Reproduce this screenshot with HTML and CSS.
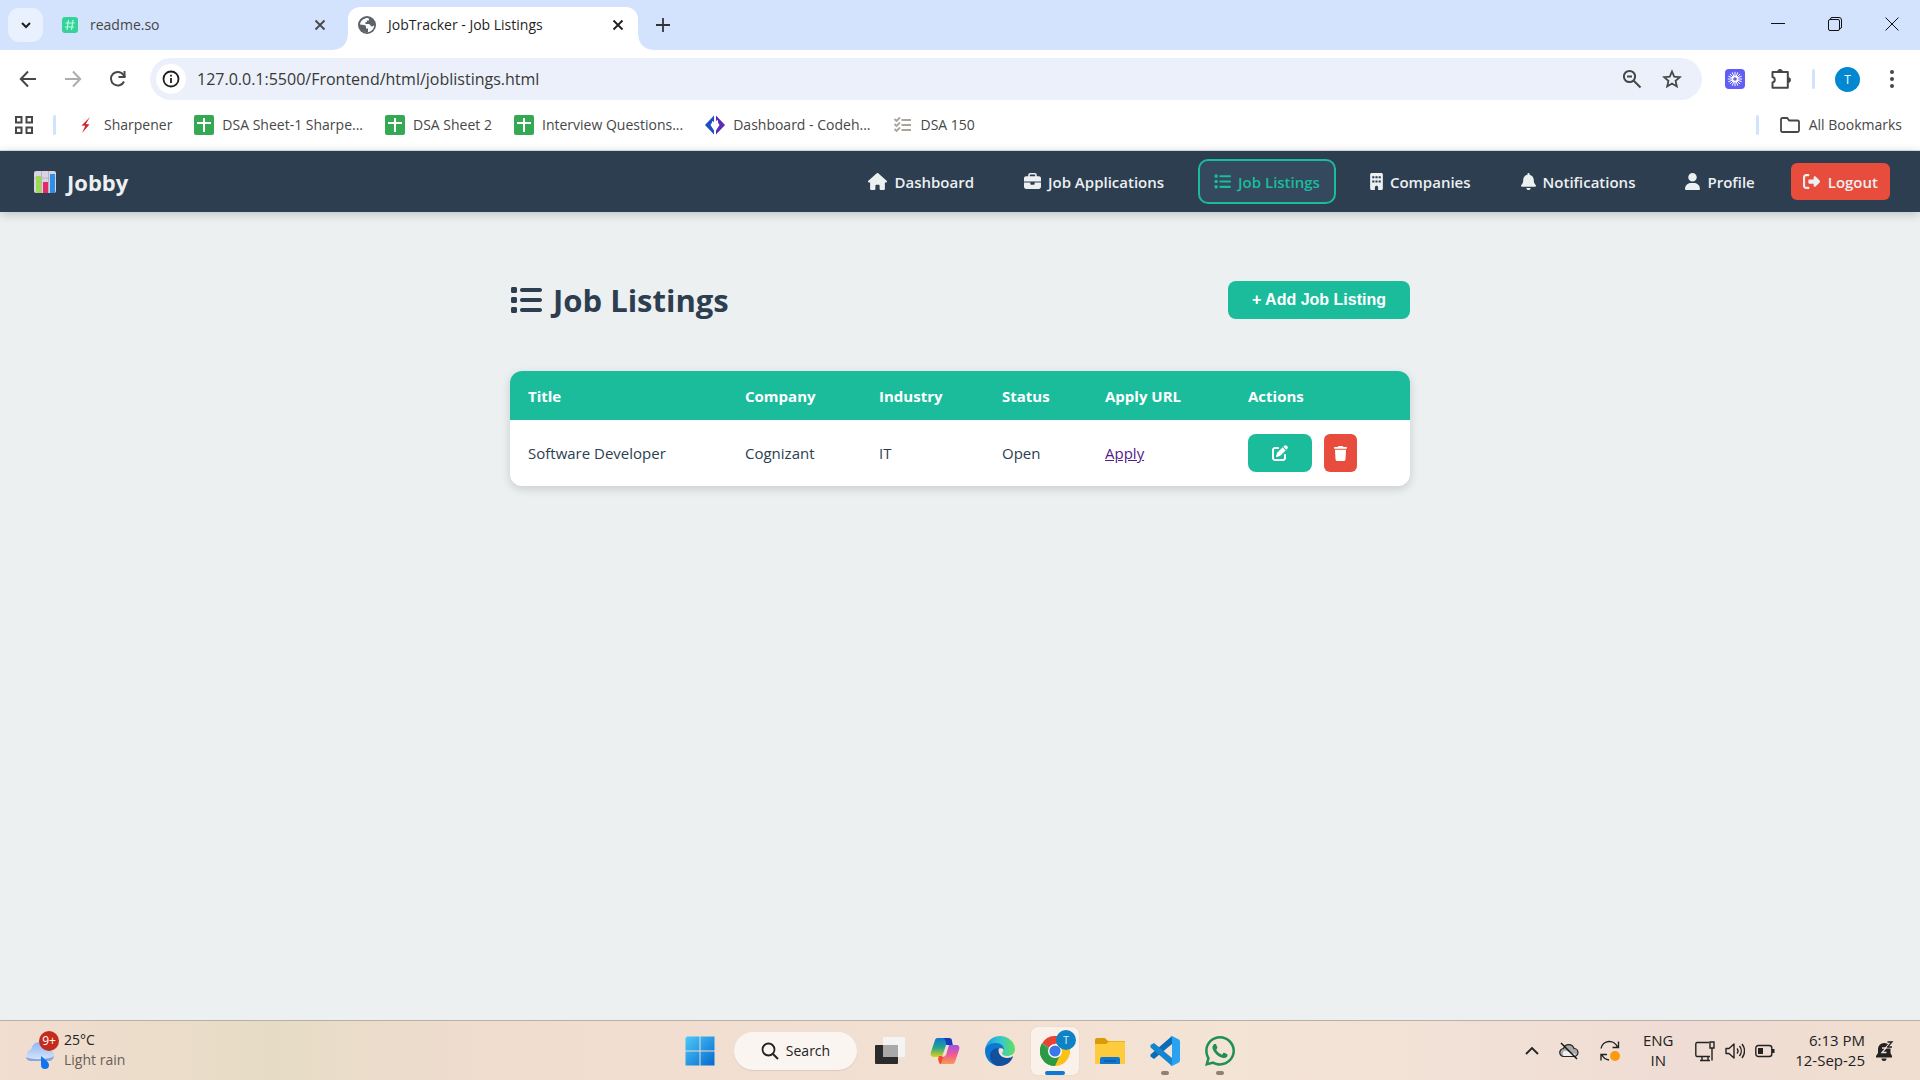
FILE: index.html
```
<!DOCTYPE html>
<html lang="en">
<head>
<meta charset="utf-8">
<meta name="viewport" content="width=device-width, initial-scale=1">
<title>JobTracker - Job Listings</title>
<link rel="stylesheet" href="styles.css">
</head>
<body>
<svg class="sprite" aria-hidden="true">
  <symbol id="list" viewBox="0 0 512 512"><path d="M40 48C26.700 48 16 58.700 16 72v48c0 13.300 10.700 24 24 24h48c13.300 0 24-10.700 24-24V72c0-13.300-10.700-24-24-24H40zM192 64c-17.700 0-32 14.300-32 32s14.300 32 32 32h288c17.700 0 32-14.300 32-32s-14.300-32-32-32H192zm0 160c-17.700 0-32 14.300-32 32s14.300 32 32 32h288c17.700 0 32-14.300 32-32s-14.300-32-32-32H192zm0 160c-17.700 0-32 14.300-32 32s14.300 32 32 32h288c17.700 0 32-14.300 32-32s-14.300-32-32-32H192zM16 232v48c0 13.300 10.700 24 24 24h48c13.300 0 24-10.700 24-24v-48c0-13.300-10.700-24-24-24H40c-13.300 0-24 10.700-24 24zM40 368c-13.300 0-24 10.700-24 24v48c0 13.300 10.700 24 24 24h48c13.300 0 24-10.700 24-24v-48c0-13.300-10.700-24-24-24H40z"/></symbol>
  <symbol id="sheet" viewBox="0 0 20 20"><rect width="20" height="20" rx="2" fill="#34a853"/><path d="M9 3h2v4h6v2h-6v8H9V9H3V7h6z" fill="#fff"/></symbol>
  <symbol id="cross" viewBox="0 0 12 12"><path d="M1.500 1.500l9 9M10.500 1.500l-9 9" fill="none" stroke="currentColor" stroke-width="1.800"/></symbol>
</svg>

<div class="tabstrip">
  <button class="tab-search" aria-label="Search tabs"><svg width="12" height="12" viewBox="0 0 12 12"><path d="M2 4l4 4 4-4" fill="none" stroke="#1f1f1f" stroke-width="2"/></svg></button>
  <div class="tab">
    <svg width="16" height="16" viewBox="0 0 16 16"><rect width="16" height="16" rx="3" fill="#36d399"/><path d="M6.500 3L5 13M11 3L9.500 13M3.500 6h9M3 10h9" stroke="#b8ffe4" stroke-width="1.200"/></svg>
    <span class="tab-title">readme.so</span>
    <button class="tab-close" aria-label="Close tab"><svg width="12" height="12"><use href="#cross"/></svg></button>
  </div>
  <div class="tab tab-active">
    <svg width="18" height="18" viewBox="0 0 18 18"><circle cx="9" cy="9" r="9" fill="#5f6368"/><path d="M10 2C6 2 2.500 4.500 2 8.500l4 .5c1.500.2 2 1 2 2v1.500h2v3.500c-2 .5-5-.5-6-2C6 16 8 16.300 9 16.300c4 0 7-3 7.200-7-1.200 1.500-3 1.500-3.700.2-.5-1-1-1.500-2.500-1.500H7.500V6H9V4.500h2V3z" fill="#fff"/></svg>
    <span class="tab-title">JobTracker - Job Listings</span>
    <button class="tab-close" aria-label="Close tab"><svg width="12" height="12"><use href="#cross"/></svg></button>
  </div>
  <button class="new-tab" aria-label="New tab"><svg width="14" height="14" viewBox="0 0 14 14"><path d="M7 0v14M0 7h14" stroke="#333" stroke-width="1.800"/></svg></button>
  <div class="window-controls">
    <button aria-label="Minimize"><svg width="14" height="14" viewBox="0 0 14 14"><path d="M0 6.500h14" stroke="#111"/></svg></button>
    <button aria-label="Restore"><svg width="14" height="14" viewBox="0 0 14 14"><path d="M2.500 2.500V2A1.500 1.500 0 0 1 4 .5h7A2.500 2.500 0 0 1 13.500 3v7a1.500 1.500 0 0 1-1.500 1.500h-.5M2 2.500h8A1.500 1.500 0 0 1 11.500 4v8A1.500 1.500 0 0 1 10 13.500H2A1.500 1.500 0 0 1 .5 12V4A1.500 1.500 0 0 1 2 2.500z" fill="none" stroke="#111"/></svg></button>
    <button aria-label="Close"><svg width="14" height="14" viewBox="0 0 14 14"><path d="M.5.5l13 13M13.500.5l-13 13" stroke="#111"/></svg></button>
  </div>
</div>

<div class="toolbar">
  <button aria-label="Back"><svg width="20" height="20" viewBox="0 0 20 20"><path d="M18 10H3M10 2.500L2.800 10l7.200 7.500" fill="none" stroke="#474747" stroke-width="2"/></svg></button>
  <button aria-label="Forward"><svg width="20" height="20" viewBox="0 0 20 20"><path d="M2 10h15M10 2.500l7.200 7.500-7.200 7.500" fill="none" stroke="#adadad" stroke-width="2"/></svg></button>
  <button aria-label="Reload"><svg width="20" height="20" viewBox="0 0 20 20"><path d="M16 12.500A6.800 6.800 0 1 1 15.500 6l1.500 2" fill="none" stroke="#474747" stroke-width="2"/><path d="M17.500 2v7h-7V7h5V2z" fill="#474747"/></svg></button>
  <div class="omnibox">
    <button class="site-info" aria-label="Site information"><svg width="18" height="18" viewBox="0 0 18 18"><circle cx="9" cy="9" r="7.500" fill="none" stroke="#1f1f1f" stroke-width="1.800"/><path d="M9 8v5M9 4.800v1.800" stroke="#1f1f1f" stroke-width="1.800"/></svg></button>
    <input class="url" type="text" aria-label="Address" value="127.0.0.1:5500/Frontend/html/joblistings.html">
    <button aria-label="Zoom"><svg width="20" height="20" viewBox="0 0 20 20"><circle cx="7.500" cy="7.500" r="5.600" fill="none" stroke="#474747" stroke-width="2"/><path d="M5 7.500h5M11.500 11.500l7 7" stroke="#474747" stroke-width="2"/></svg></button>
    <button aria-label="Bookmark this tab"><svg width="20" height="20" viewBox="0 0 20 20"><path d="M10 2.500l2.200 5.200 5.600.5-4.200 3.700 1.200 5.500-4.800-2.900-4.800 2.900 1.200-5.500-4.200-3.700 5.600-.5z" fill="none" stroke="#474747" stroke-width="1.800"/></svg></button>
  </div>
  <button class="ext" aria-label="Loom extension"><svg width="20" height="20" viewBox="0 0 20 20"><rect width="20" height="20" rx="4" fill="#625df5"/><path d="M10 2.800v14.400M2.800 10h14.400M4.900 4.900l10.200 10.200M15.100 4.900L4.900 15.100M7.200 3.300l5.600 13.400M12.800 3.300L7.200 16.700M3.300 7.200l13.400 5.600M3.300 12.800l13.400-5.600" stroke="#fff" stroke-width="1"/><circle cx="10" cy="10" r="3.200" fill="#fff"/><circle cx="10" cy="10" r="1.800" fill="#625df5"/></svg></button>
  <button class="ext" aria-label="Extensions"><svg width="22" height="22" viewBox="0 0 22 22"><path d="M2.500 4h15.300v15.800H2.500v-5.300a2.800 2.800 0 0 0 0-5.500z" fill="none" stroke="#474747" stroke-width="2" stroke-linejoin="round"/><path d="M7.500 4a2.500 2.500 0 0 1 5 0zM18 9.500a2.500 2.500 0 0 1 0 5z" fill="#474747" stroke="#474747"/></svg></button>
  <span class="rule"></span>
  <button class="avatar">T</button>
  <button class="more" aria-label="Menu"><svg width="20" height="20" viewBox="0 0 20 20"><g fill="#474747"><circle cx="10" cy="3" r="2"/><circle cx="10" cy="10" r="2"/><circle cx="10" cy="17" r="2"/></g></svg></button>
</div>

<nav class="bookmarks" aria-label="Bookmarks">
  <button class="apps" aria-label="Apps"><svg width="18" height="18" viewBox="0 0 18 18"><path d="M1 1h5.500v5.500H1zM11.500 1H17v5.500h-5.500zM1 11.500h5.500V17H1zM11.500 11.500H17V17h-5.500z" fill="none" stroke="#474747" stroke-width="2"/></svg></button>
  <span class="rule"></span>
  <a href="#"><svg width="20" height="20" viewBox="0 0 20 20"><path d="M14 2L5.500 10.500l3.800.3L6 18l7.500-8.500-3.700-.4z" fill="#d3222e"/></svg>Sharpener</a>
  <a href="#"><svg width="20" height="20"><use href="#sheet"/></svg>DSA Sheet-1 Sharpe...</a>
  <a href="#"><svg width="20" height="20"><use href="#sheet"/></svg>DSA Sheet 2</a>
  <a href="#"><svg width="20" height="20"><use href="#sheet"/></svg>Interview Questions...</a>
  <a href="#"><svg width="20" height="20" viewBox="0 0 20 20"><path d="M9 .5L0 10l9 9.500v-4L5.500 10 7 7.500V6l2 1z" fill="#1d4fc4"/><path d="M11 .5L20 10l-9 9.500v-4l3.500-5.500L13 7.500V5l-2 1z" fill="#5b2bb5"/></svg>Dashboard - Codeh...</a>
  <a href="#"><svg width="20" height="20" viewBox="0 0 20 20"><path d="M8.500 5H18M8.500 10H18M8.500 15H18" stroke="#aaa49c" stroke-width="2"/><path d="M1.500 4l2 2L7 2.500M1.500 9l2 2L7 7.500M1.500 14l2 2L7 12.500" fill="none" stroke="#aaa49c" stroke-width="1.800"/></svg>DSA 150</a>
  <span class="rule rule-end"></span>
  <a class="all-bookmarks" href="#"><svg width="22" height="20" viewBox="0 0 22 20"><path d="M2 4.500A1.500 1.500 0 0 1 3.500 3h4.700l2 2.500h8.300A1.500 1.500 0 0 1 20 7v8.500a1.500 1.500 0 0 1-1.500 1.500h-15A1.500 1.500 0 0 1 2 15.500z" fill="none" stroke="#474747" stroke-width="1.800"/></svg>All Bookmarks</a>
</nav>

<div class="page">
  <header class="navbar">
    <a class="brand" href="#"><svg width="22" height="22" viewBox="0 0 22 22"><rect width="22" height="22" rx="2" fill="#d9d4e3"/><path d="M0 7h22M7.500 0v22M14.500 0v22" stroke="#b9b3c6"/><rect x="2" y="5" width="5" height="17" fill="#9bdc4e"/><rect x="9" y="11" width="5" height="11" fill="#e22c66"/><rect x="16" y="3" width="5" height="19" fill="#2e8fe8"/></svg>Jobby</a>
    <nav class="menu" aria-label="Main">
      <a href="#"><svg width="19" height="17" viewBox="0 0 576 512"><path d="M575.800 255.500c0 18-15 32.100-32 32.100h-32l.7 160.200c0 2.700-.2 5.400-.5 8.100V472c0 22.100-17.900 40-40 40h-80c-22.100 0-40-17.900-40-40v-88c0-17.700-14.300-32-32-32h-64c-17.700 0-32 14.300-32 32v88c0 22.100-17.900 40-40 40h-80c-22.100 0-40-17.900-40-40V287.600H32c-18 0-32-14-32-32.100 0-9 3-17 10-24L266.400 8c7-7 15-8 22-8s15 2 21 7l255.400 224.500c8 7 12 15 11 24z"/></svg>Dashboard</a>
      <a href="#"><svg width="17" height="17" viewBox="0 0 512 512"><path d="M184 48h144c4.400 0 8 3.600 8 8v40H176V56c0-4.400 3.600-8 8-8zm-56 8v40H64C28.700 96 0 124.700 0 160v96h512v-96c0-35.300-28.700-64-64-64h-64V56c0-30.900-25.100-56-56-56H184c-30.900 0-56 25.100-56 56zM512 288H320v32c0 17.700-14.300 32-32 32h-64c-17.700 0-32-14.300-32-32v-32H0v128c0 35.300 28.700 64 64 64h384c35.300 0 64-28.700 64-64V288z"/></svg>Job Applications</a>
      <a class="current" href="#" aria-current="page"><svg width="17" height="17"><use href="#list"/></svg>Job Listings</a>
      <a href="#"><svg width="13" height="17" viewBox="0 0 384 512"><path fill-rule="evenodd" d="M48 0C21.500 0 0 21.500 0 48v416c0 26.500 21.500 48 48 48h96v-80c0-26.500 21.500-48 48-48s48 21.500 48 48v80h96c26.500 0 48-21.500 48-48V48c0-26.500-21.500-48-48-48H48zM64 96h64v64H64zM160 96h64v64h-64zM256 96h64v64h-64zM64 224h64v64H64zM160 224h64v64h-64zM256 224h64v64h-64z"/></svg>Companies</a>
      <a href="#"><svg width="15" height="17" viewBox="0 0 448 512"><path d="M224 0c-17.700 0-32 14.300-32 32v19.200C119 66 64 130.600 64 208v18.800c0 47-17.300 92.400-48.500 127.600l-7.400 8.300c-8.400 9.400-10.400 22.900-5.300 34.400S19.400 416 32 416h384c12.600 0 24-7.400 29.200-18.900s3.100-25-5.300-34.400l-7.400-8.300C401.300 319.200 384 273.900 384 226.800V208c0-77.400-55-142-128-156.800V32c0-17.700-14.300-32-32-32zm45.300 493.300c12-12 18.700-28.300 18.700-45.300H160c0 17 6.700 33.300 18.700 45.300s28.300 18.700 45.300 18.700 33.300-6.700 45.300-18.700z"/></svg>Notifications</a>
      <a href="#"><svg width="15" height="17" viewBox="0 0 448 512"><path d="M224 256a128 128 0 1 0 0-256 128 128 0 1 0 0 256zm-45.700 48C79.800 304 0 383.800 0 482.300 0 498.700 13.300 512 29.700 512h388.600c16.400 0 29.700-13.300 29.700-29.700 0-98.500-79.800-178.300-178.300-178.300h-91.400z"/></svg>Profile</a>
      <button class="logout"><svg width="17" height="17" viewBox="0 0 512 512"><path d="M377.900 105.900l122.800 122.800c7.200 7.200 11.300 17.100 11.300 27.300s-4.100 20.100-11.300 27.300L377.900 406.100c-6.400 6.400-15 9.900-24 9.900-18.700 0-33.900-15.200-33.900-33.900V320H192c-17.700 0-32-14.300-32-32v-64c0-17.700 14.300-32 32-32h128v-62.100c0-18.700 15.200-33.900 33.900-33.900 9 0 17.600 3.600 24 9.900zM160 96H96c-17.700 0-32 14.300-32 32v256c0 17.700 14.300 32 32 32h64c17.700 0 32 14.300 32 32s-14.300 32-32 32H96c-53 0-96-43-96-96V128C0 75 43 32 96 32h64c17.700 0 32 14.300 32 32s-14.300 32-32 32z"/></svg>Logout</button>
    </nav>
  </header>

  <main class="content">
    <div class="heading">
      <h1><svg width="32" height="32"><use href="#list"/></svg>Job Listings</h1>
      <button class="btn btn-add">+ Add Job Listing</button>
    </div>
    <table class="listings">
      <colgroup><col class="col-title"><col class="col-company"><col class="col-industry"><col class="col-status"><col class="col-url"><col></colgroup>
      <thead>
        <tr><th scope="col">Title</th><th scope="col">Company</th><th scope="col">Industry</th><th scope="col">Status</th><th scope="col">Apply URL</th><th scope="col">Actions</th></tr>
      </thead>
      <tbody>
        <tr>
          <td>Software Developer</td><td>Cognizant</td><td>IT</td><td>Open</td><td><a class="apply" href="#">Apply</a></td>
          <td><div class="actions">
            <button class="btn btn-edit" aria-label="Edit"><svg width="16" height="16" viewBox="0 0 512 512"><path d="M471.600 21.700c-21.900-21.900-57.300-21.900-79.200 0l-30.100 30 97.900 97.900 30.100-30.100c21.900-21.900 21.900-57.300 0-79.200l-18.700-18.600zm-299.200 220c-6.100 6.100-10.800 13.600-13.500 21.900l-29.600 88.800c-2.900 8.600-.6 18.100 5.800 24.600s15.900 8.700 24.600 5.800l88.800-29.600c8.200-2.700 15.700-7.400 21.900-13.500l167.300-167.400-98-98-167.300 167.400zM96 64C43 64 0 107 0 160v256c0 53 43 96 96 96h256c53 0 96-43 96-96v-96c0-17.700-14.300-32-32-32s-32 14.300-32 32v96c0 17.700-14.300 32-32 32H96c-17.700 0-32-14.300-32-32V160c0-17.700 14.300-32 32-32h96c17.700 0 32-14.300 32-32s-14.300-32-32-32H96z"/></svg></button>
            <button class="btn btn-delete" aria-label="Delete"><svg width="13" height="15" viewBox="0 0 448 512"><path d="M135.200 17.700L128 32H32C14.300 32 0 46.300 0 64s14.300 32 32 32h384c17.700 0 32-14.300 32-32s-14.300-32-32-32h-96l-7.200-14.300C307.400 6.800 296.300 0 284.200 0H163.800c-12.100 0-23.200 6.800-28.600 17.700zM416 128H32l21.200 339c1.600 25.300 22.600 45 47.900 45h245.800c25.300 0 46.300-19.700 47.900-45L416 128z"/></svg></button>
          </div></td>
        </tr>
      </tbody>
    </table>
  </main>
</div>

<footer class="taskbar">
  <button class="weather">
    <span class="weather-icon"><svg width="30" height="28" viewBox="0 0 30 28"><defs><linearGradient id="cloud" x2="0" y2="1"><stop stop-color="#8db5f2"/><stop offset="1" stop-color="#dbe8fb"/></linearGradient></defs><path d="M6 20a6 6 0 0 1 0-11.500C7 4 10 1 15 1c5 0 9 3 9.500 8a5.600 5.600 0 0 1 0 11z" fill="url(#cloud)"/><path d="M1 16c5 3 22 3 28-1-1 4-3 5-5 5H6c-3 0-5-2-5-4z" fill="#86a6e0"/><path d="M16 15c5 4 8 6 8 9a4 4 0 0 1-8 0z" fill="#1275f0"/></svg><span class="badge">9+</span></span>
    <span class="weather-text"><span>25°C</span><span class="muted">Light rain</span></span>
  </button>
  <div class="dock">
    <button class="app" aria-label="Start"><svg width="30" height="30" viewBox="0 0 30 30"><defs><linearGradient id="win" x2="1" y2="1"><stop stop-color="#4cc9fb"/><stop offset="1" stop-color="#0669cc"/></linearGradient></defs><path d="M2 .5h12.500v14H.5V2zM15.500.5h14v14h-14zM.5 15.500h14v14H.5zM15.500 15.500h14v14h-14z" fill="url(#win)"/></svg></button>
    <button class="search"><svg width="18" height="18" viewBox="0 0 18 18"><circle cx="7.500" cy="7.500" r="6" fill="none" stroke="#222" stroke-width="1.800"/><path d="M12 12l5 5" stroke="#222" stroke-width="2"/></svg>Search</button>
    <button class="app" aria-label="Task view"><svg width="30" height="30" viewBox="0 0 30 30"><rect y="9" width="23" height="19" rx="1" fill="#2b2b2b"/><rect x="8" y="1" width="22" height="20" rx="1" fill="#f4f4f4"/><path d="M8 9h15v12H8z" fill="#a9a9a9"/></svg></button>
    <button class="app" aria-label="Copilot"><svg width="30" height="30" viewBox="0 0 30 30"><defs><linearGradient id="cpa" x2="0" y2="1"><stop stop-color="#1473d8"/><stop offset=".5" stop-color="#22a58a"/><stop offset="1" stop-color="#e5cf1b"/></linearGradient><linearGradient id="cpb" x2="0" y2="1"><stop stop-color="#a44de8"/><stop offset=".5" stop-color="#ee5a96"/><stop offset="1" stop-color="#fa9a4c"/></linearGradient></defs><path d="M8 2h11l-5 16c-1 2-2 3-4 3H4c-3 0-4-2-3-5L5 4c.6-1.500 1.500-2 3-2z" fill="url(#cpa)"/><path d="M14 2h5c2 0 3 1 3 3l1 5h-5c-2 0-2-2-2-4z" fill="#163bb8"/><path d="M22 28H11l5-15c1-3 2-4 4-4h6c3 0 4 2 3 5l-4 12c-.6 1.500-1.500 2-3 2z" fill="url(#cpb)"/><path d="M9 20h5l-3 8c-2 0-2-2-3-5z" fill="#f04c36"/><path d="M16 9h3l-3 10c-1 1-2 2-4 2z" fill="#eedfd6"/></svg></button>
    <button class="app" aria-label="Edge"><svg width="30" height="30" viewBox="0 0 30 30"><defs><linearGradient id="edge" x2="1"><stop stop-color="#1a9be0"/><stop offset=".5" stop-color="#36c5d0"/><stop offset="1" stop-color="#64e05a"/></linearGradient></defs><path d="M0 14C1 6 7 0 15 0s15 6 15 13c0 5-4 7-8 7-3 0-5-1-5-3 3-3 1-8-5-8C6 9 1 12 0 14z" fill="url(#edge)"/><path d="M0 15c0-5 5-8 11-8 5 0 8 3 8 7-2-3-8-2-8 4 0 5 5 8 9 9-3 2-6 3-8 3C5 28 0 22 0 15z" fill="#0e77cf"/><path d="M11 18c0-3 1-5 3-6-2 6 3 10 8 10 3 0 5-1 6-2 0 3-5 10-13 10-6 0-10-5-10-10 0-4 3-8 8-8-1 1-2 3-2 6z" fill="#124f9c"/></svg></button>
    <button class="app app-active app-open" aria-label="Chrome"><svg width="30" height="30" viewBox="0 0 30 30"><path d="M15 15L2 7.500a15 15 0 0 1 26 0z" fill="#ea4335"/><path d="M15 15L2 7.500A15 15 0 0 0 15 30z" fill="#34a04a"/><path d="M15 15h-2l2 15A15 15 0 0 0 28 7.500H15z" fill="#fbc116"/><path d="M2 7.500l6.500 11L15 22l5-3-5 11A15 15 0 0 1 2 7.500z" fill="#2c9a45"/><circle cx="15" cy="15" r="7" fill="#fff"/><circle cx="15" cy="15" r="5.600" fill="#3b78e7"/></svg><span class="badge badge-blue">T</span></button>
    <button class="app" aria-label="File Explorer"><svg width="30" height="30" viewBox="0 0 30 30"><path d="M0 4a2 2 0 0 1 2-2h8l3 3h17v6H0z" fill="#d99b08"/><path d="M0 8h11l3-2.500h16V28H0z" fill="#fdcb3c"/><path d="M5 28v-5a2 2 0 0 1 2-2h16a2 2 0 0 1 2 2v5z" fill="#1377ce"/><path d="M9 25h12" stroke="#0a4c8c"/></svg></button>
    <button class="app app-open" aria-label="Visual Studio Code"><svg width="30" height="30" viewBox="0 0 30 30"><path d="M22 0v8L4 23l-3.500-2.500v-2z" fill="#0a6cb5"/><path d="M.5 9L4 7l18 15v8L.5 11.500z" fill="#1585cf"/><path d="M22 0l7 3.500 1 1.500v20l-1 1.500-7 3.500-2-1c1 0 2 0 2-2V3c0-2-1-2-2-2z" fill="#29a3f1"/></svg></button>
    <button class="app app-open" aria-label="WhatsApp"><svg width="30" height="30" viewBox="0 32 448 448"><path fill="#1f8f57" d="M380.900 97.100C339 55.100 283.200 32 223.900 32c-122.400 0-222 99.600-222 222 0 39.100 10.200 77.300 29.600 111L0 480l117.700-30.900c32.400 17.700 68.900 27 106.100 27h.1c122.300 0 224.100-99.600 224.100-222 0-59.300-25.200-115-67.100-157zm-157 341.600c-33.200 0-65.700-8.900-94-25.700l-6.700-4-69.800 18.300L72 359.200l-4.400-7c-18.500-29.400-28.200-63.300-28.200-98.200 0-101.700 82.800-184.500 184.600-184.500 49.300 0 95.600 19.200 130.400 54.100 34.800 34.900 56.200 81.200 56.100 130.500 0 101.800-84.900 184.600-186.600 184.600zm101.200-138.200c-5.500-2.800-32.800-16.200-37.900-18-5.100-1.900-8.800-2.800-12.500 2.800-3.700 5.600-14.300 18-17.600 21.800-3.200 3.700-6.500 4.200-12 1.400-32.600-16.300-54-29.100-75.500-66-5.700-9.800 5.700-9.100 16.300-30.300 1.800-3.700.9-6.900-.5-9.700-1.400-2.800-12.500-30.100-17.100-41.200-4.500-10.800-9.100-9.300-12.500-9.500-3.200-.2-6.900-.2-10.600-.2-3.700 0-9.700 1.400-14.800 6.900-5.100 5.600-19.400 19-19.400 46.300 0 27.300 19.900 53.700 22.600 57.400 2.800 3.700 39.100 59.700 94.800 83.800 35.200 15.200 49 16.500 66.600 13.900 10.700-1.600 32.800-13.400 37.400-26.400 4.600-13 4.600-24.100 3.200-26.400-1.300-2.500-5-3.900-10.500-6.600z"/></svg></button>
  </div>
  <div class="tray">
    <button aria-label="Show hidden icons"><svg width="14" height="10" viewBox="0 0 14 10"><path d="M1 8l6-6 6 6" fill="none" stroke="#222" stroke-width="1.800"/></svg></button>
    <button aria-label="OneDrive"><svg width="20" height="18" viewBox="0 0 20 18"><path d="M5 14.500a4 4 0 0 1-.5-8A5.500 5.500 0 0 1 15 6.500a4 4 0 0 1 0 8z" fill="#a8a8a8" stroke="#222" stroke-width="1.200"/><path d="M5 14a3 3 0 0 1 0-5c4-1 6 3 12 3l-2 2z" fill="#eee"/><path d="M2 1l16 16" stroke="#111" stroke-width="1.500"/></svg></button>
    <button aria-label="Windows Update"><svg width="22" height="22" viewBox="0 0 22 22"><path d="M2 8.500a8.500 8.500 0 0 1 16.500-1M19.500 1.500v6h-6M2 20.500v-6h6M3 15a9 9 0 0 0 7 5" fill="none" stroke="#222" stroke-width="1.400"/><circle cx="16" cy="16" r="5" fill="#fb9a0c"/></svg></button>
    <button class="lang"><span>ENG</span><span>IN</span></button>
    <button class="status" aria-label="Network, volume and battery">
      <svg width="20" height="22" viewBox="0 0 20 22"><path d="M14 2.500H2A1.500 1.500 0 0 0 .8 4v11A1.500 1.500 0 0 0 2 16.500h13M5 20.500h10M7 17v3M13 17v3M15 2h4v6h-4zM17 8v12.500" fill="none" stroke="#222" stroke-width="1.400"/></svg>
      <svg width="20" height="18" viewBox="0 0 20 18"><path d="M1 6.500h3l5-4.500v14l-5-4.500H1zM12 6.500a4 4 0 0 1 0 5M14.500 4a8 8 0 0 1 0 10M17 2a11 11 0 0 1 0 14" fill="none" stroke="#222" stroke-width="1.400" stroke-linejoin="round"/></svg>
      <svg width="20" height="14" viewBox="0 0 20 14"><rect x=".8" y="1.500" width="16" height="11" rx="2.500" fill="none" stroke="#222" stroke-width="1.400"/><path d="M3 4h5v6H3zM17 5h2.500v4H17z" fill="#222"/></svg>
    </button>
    <button class="clock"><span>6:13 PM</span><span>12-Sep-25</span></button>
    <button aria-label="Notifications snoozed"><svg width="18" height="20" viewBox="0 0 18 20"><path d="M8 2a6 6 0 0 0-6 6v4l-2 3v1.500h16V15l-1.500-3V8A6 6 0 0 0 8 2zM5.500 17.500a2.500 2.500 0 0 0 5 0z" fill="#222"/><path d="M11.500 1H16l-4.500 5H16" fill="none" stroke="#efded7" stroke-width="3"/><path d="M11.500 1H16l-4.500 5H16" fill="none" stroke="#222" stroke-width="1.300"/><path d="M6 7h4l-4 4.500h4.500" fill="none" stroke="#efded7" stroke-width="1.300"/></svg></button>
  </div>
</footer>
</body>
</html>
```
FILE: styles.css
```
* { box-sizing: border-box; }

body {
  margin: 0;
  min-height: 100vh;
  display: flex;
  flex-direction: column;
  font-family: "Open Sans", "Noto Sans", sans-serif;
  font-size: 14px;
  color: #2c3e50;
}

button {
  display: flex;
  align-items: center;
  justify-content: center;
  padding: 0;
  border: 0;
  background: none;
  font: inherit;
  color: inherit;
}

a { color: inherit; text-decoration: none; }
svg { flex: none; display: block; }
.sprite { position: absolute; width: 0; height: 0; }

/* Browser tabs */
.tabstrip {
  height: 50px;
  display: flex;
  background: #d3e2fd;
  color: #474747;
}
.tab-search {
  width: 35px;
  height: 34px;
  margin: 8px 5px 0 8px;
  border-radius: 11px;
  background: #e9f1fe;
}
.tab {
  width: 290px;
  margin-top: 7px;
  padding: 0 12px 8px 14px;
  display: flex;
  align-items: center;
  gap: 12px;
}
.tab-title { flex: 1; white-space: nowrap; }
.tab-close { width: 12px; height: 12px; }
.tab-active {
  position: relative;
  margin-left: 10px;
  padding-left: 10px;
  padding-right: 14px;
  border-radius: 12px 12px 0 0;
  background: #fff;
  color: #1f1f1f;
}
.tab-active::before,
.tab-active::after {
  content: "";
  position: absolute;
  bottom: 0;
  width: 14px;
  height: 14px;
}
.tab-active::before { right: 100%; background: radial-gradient(circle at 0 0, transparent 13px, #fff 14px); }
.tab-active::after { left: 100%; background: radial-gradient(circle at 100% 0, transparent 13px, #fff 14px); }
.new-tab { width: 50px; }
.window-controls { display: flex; margin-left: auto; }
.window-controls button { width: 57px; height: 48px; }

/* Toolbar */
.toolbar {
  height: 58px;
  padding: 0 18px;
  display: flex;
  align-items: center;
  gap: 25px;
  background: #fff;
}
.omnibox {
  flex: 1;
  height: 42px;
  margin: 0 -2px 0 -3px;
  padding: 0 20px 0 6px;
  display: flex;
  align-items: center;
  gap: 20px;
  border-radius: 21px;
  background: #ebf0fa;
}
.site-info { width: 30px; height: 30px; border-radius: 50%; background: #fff; }
.url {
  flex: 1;
  min-width: 0;
  margin-left: -9px;
  padding: 0;
  border: 0;
  outline: 0;
  background: none;
  font: inherit;
  font-size: 16px;
  color: #383838;
}
.rule { width: 3px; height: 20px; border-radius: 2px; background: #d3e2fd; }
.toolbar .rule { margin: 0 -5px; }
.toolbar .more { margin-left: -3px; }
.avatar {
  width: 25px;
  height: 25px;
  border-radius: 50%;
  background: #0288d1;
  color: #fff;
  font-size: 12px;
}

/* Bookmarks bar */
.bookmarks {
  height: 43px;
  padding: 0 18px 9px 15px;
  display: flex;
  align-items: center;
  gap: 20px;
  border-bottom: 1px solid #dce3e6;
  background: #fff;
  color: #474747;
}
.bookmarks a { padding-right: 2px; display: flex; align-items: center; gap: 8px; white-space: nowrap; }
.rule-end { margin-left: auto; }
.bookmarks .all-bookmarks { padding-right: 0; }

/* Web page */
.page { flex: 1; background: #ecf0f1; }
.navbar {
  height: 61px;
  padding: 0 30px 0 34px;
  display: flex;
  align-items: center;
  justify-content: space-between;
  background: #2c3e50;
  color: #ecf0f1;
  box-shadow: 0 2px 10px rgba(0, 0, 0, .2);
}
.brand { display: flex; align-items: center; gap: 11px; font-size: 22px; font-weight: 700; }
.menu { display: flex; align-items: center; gap: 18px; font-size: 15px; font-weight: 600; }
.menu svg, .btn svg, .heading svg { fill: currentColor; }
.menu a {
  height: 45px;
  padding: 0 14px;
  display: flex;
  align-items: center;
  gap: 7px;
  border: 2px solid transparent;
  border-radius: 10px;
}
.menu .current { border-color: #1abc9c; background: #34495e; color: #1abc9c; }
.logout {
  height: 37px;
  margin-left: 2px;
  padding: 0 12px;
  gap: 8px;
  border-radius: 6px;
  background: #e74c3c;
}

.content { width: 100%; max-width: 900px; margin: 0 auto; }
.heading { display: flex; align-items: center; justify-content: space-between; padding: 64px 0 47px; }
.heading h1 {
  margin: 0;
  display: flex;
  align-items: center;
  gap: 11px;
  font-size: 31px;
  line-height: 48px;
}
.btn { height: 38px; border-radius: 8px; background: #1abc9c; color: #fff; }
.btn-add { padding: 0 24px; font: bold 16px "Liberation Sans", sans-serif; }

.listings {
  width: 100%;
  table-layout: fixed;
  border-collapse: collapse;
  overflow: hidden;
  border-radius: 12px;
  background: #fff;
  box-shadow: 0 3px 10px rgba(0, 0, 0, .15);
  font-size: 15px;
}
.col-title { width: 217px; }
.col-company { width: 134px; }
.col-industry { width: 123px; }
.col-status { width: 103px; }
.col-url { width: 143px; }
.listings th, .listings td { padding: 0 18px; text-align: left; }
.listings th { height: 49px; background: #1abc9c; color: #fff; font-weight: 700; }
.listings td { height: 66px; }
.apply { color: #551a8b; text-decoration: underline; }
.actions { display: flex; gap: 12px; }
.btn-edit { width: 64px; }
.btn-delete { width: 33px; border-radius: 6px; background: #e74c3c; }

/* Taskbar */
.taskbar {
  height: 60px;
  display: grid;
  grid-template-columns: 1fr auto 1fr;
  align-items: center;
  border-top: 1px solid #b9afa7;
  background: linear-gradient(90deg, #f2ddd0 0%, #e6dcc5 14%, #f0ddd0 26%, #f2e0d2 50%, #f4e4d6 64%, #efddd5 88%, #f0decf 100%);
  color: #222;
}
.weather { justify-self: start; padding-left: 25px; gap: 5px; }
.weather-icon { position: relative; width: 34px; height: 36px; padding-top: 8px; }
.badge {
  position: absolute;
  top: -2px;
  right: 0;
  width: 20px;
  height: 20px;
  border-radius: 50%;
  background: #c42b1c;
  color: #fff;
  font-size: 12px;
  line-height: 20px;
  text-align: center;
}
.weather-text, .lang, .clock { display: flex; flex-direction: column; padding-bottom: 2px; line-height: 20px; }
.weather-text { text-align: left; }
.muted { color: #66605a; }
.dock { display: flex; align-items: center; gap: 7px; }
.app { position: relative; width: 48px; height: 48px; border-radius: 6px; }
.app-active { background: #faf1eb; box-shadow: 0 0 1px #bba; }
.app-open::after {
  content: "";
  position: absolute;
  bottom: 0;
  width: 8px;
  height: 4px;
  border-radius: 2px;
  background: #8b8179;
}
.app-active::after { width: 20px; background: #0f78d4; }
.badge-blue { top: 3px; right: 3px; background: #0d83c5; color: #cde9f9; font-size: 11px; }
.search {
  width: 123px;
  height: 38px;
  margin: 0 2px 0 3px;
  gap: 7px;
  border-radius: 19px;
  background: #fbf5f1;
  box-shadow: 0 1px 1px #dccbc0;
}
.tray { justify-self: end; display: flex; align-items: center; gap: 20px; padding-right: 26px; }
.lang { width: 34px; }
.lang, .clock { font-size: 15px; }
.status { gap: 10px; }
.clock { align-items: flex-end; margin-right: -9px; }
```
